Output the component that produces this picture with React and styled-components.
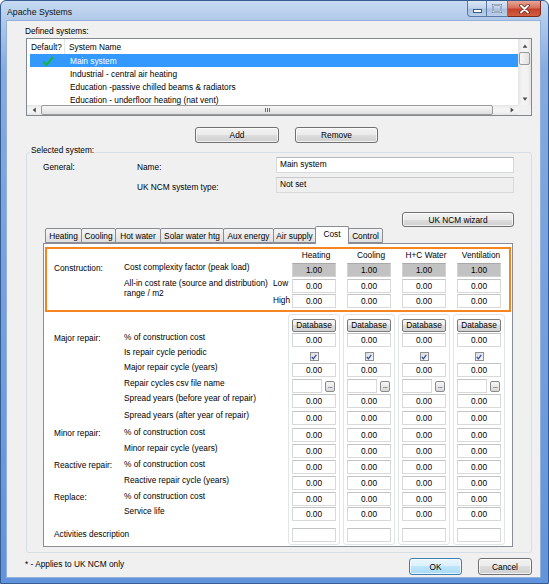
import React from 'react'
import styled, { createGlobalStyle } from 'styled-components'

const FONT = `"Liberation Sans", Arial, sans-serif`

const GlobalStyle = createGlobalStyle`
  html, body { margin: 0; padding: 0; background: #fff; }
  body { font-family: ${FONT}; font-size: 8.3px; color: #000; }
  * { box-sizing: border-box; }
`

const systems = [
  { name: 'Main system', isDefault: true },
  { name: 'Industrial - central air heating' },
  { name: 'Education -passive chilled beams & radiators' },
  { name: 'Education - underfloor heating (nat vent)' },
]

const tabs = [
  { label: 'Heating', w: 37 },
  { label: 'Cooling', w: 35 },
  { label: 'Hot water', w: 46 },
  { label: 'Solar water htg', w: 64 },
  { label: 'Aux energy', w: 51 },
  { label: 'Air supply', w: 43 },
  { label: 'Cost', w: 34, active: true },
  { label: 'Control', w: 35 },
]

const columns = ['Heating', 'Cooling', 'H+C Water', 'Ventilation']

// lower part of the Cost tab: one entry per row, heights follow the screenshot
const costRows = [
  { h: 16, kind: 'db' },
  { h: 15, kind: 'num', section: 'Major repair:', label: '% of construction cost' },
  { h: 15, kind: 'check', label: 'Is repair cycle periodic' },
  { h: 16, kind: 'num', label: 'Major repair cycle (years)' },
  { h: 15, kind: 'file', label: 'Repair cycles csv file name' },
  { h: 17, kind: 'num', label: 'Spread years (before year of repair)' },
  { h: 17, kind: 'num', label: 'Spread years (after year of repair)' },
  { h: 16, kind: 'num', section: 'Minor repair:', label: '% of construction cost' },
  { h: 16, kind: 'num', label: 'Minor repair cycle (years)' },
  { h: 16, kind: 'num', section: 'Reactive repair:', label: '% of construction cost' },
  { h: 16, kind: 'num', label: 'Reactive repair cycle (years)' },
  { h: 15, kind: 'num', section: 'Replace:', label: '% of construction cost' },
  { h: 21, kind: 'num', label: 'Service life' },
  { h: 16, kind: 'empty', wide: 'Activities description' },
]

export default function App() {
  return (
    <>
      <GlobalStyle />
      <Window>
        <TitleBar>
          <TitleText>Apache Systems</TitleText>
          <CaptionButtons>
            <CaptionButton w={20} first>
              <svg width="9" height="8" viewBox="0 0 9 8">
                <rect x="0.5" y="4.5" width="8" height="3" fill="#fff" stroke="#3d5a85" strokeWidth="1" />
              </svg>
            </CaptionButton>
            <CaptionButton w={21}>
              <svg width="10" height="9" viewBox="0 0 10 9">
                <rect x="1" y="1" width="8" height="7" fill="none" stroke="#3d5a85" strokeWidth="2" />
                <rect x="1" y="1" width="8" height="7" fill="none" stroke="#fff" strokeWidth="1" />
              </svg>
            </CaptionButton>
            <CaptionButton w={33} close>
              <svg width="11" height="10" viewBox="0 0 11 10">
                <path d="M2 1.5 L9 8.5 M9 1.5 L2 8.5" stroke="#6b1d12" strokeWidth="3.4" strokeLinecap="round" />
                <path d="M2 1.5 L9 8.5 M9 1.5 L2 8.5" stroke="#fff" strokeWidth="2" strokeLinecap="round" />
              </svg>
            </CaptionButton>
          </CaptionButtons>
        </TitleBar>

        <Client>
          <Caption>Defined systems:</Caption>
          <ListBox>
            <ListBody>
              <ListMain>
                <ListHeader>
                  <HeaderCell w={38} divider>Default?</HeaderCell>
                  <HeaderCell>System Name</HeaderCell>
                </ListHeader>
                {systems.map((s) => (
                  <ListRow key={s.name} selected={s.isDefault}>
                    <DefaultCell>
                      {s.isDefault && (
                        <svg width="12" height="10" viewBox="0 0 12 10">
                          <path d="M1 5.5 L4.5 9 L11 1" fill="none" stroke="#19b43a" strokeWidth="2" />
                        </svg>
                      )}
                    </DefaultCell>
                    <NameCell>{s.name}</NameCell>
                  </ListRow>
                ))}
              </ListMain>
              <VScroll>
                <ScrollArrow><Arrow dir="up" /></ScrollArrow>
                <VThumb />
                <Spacer />
                <ScrollArrow><Arrow dir="down" /></ScrollArrow>
              </VScroll>
            </ListBody>
            <HScroll>
              <ScrollArrow small><Arrow dir="left" /></ScrollArrow>
              <HThumb>
                <Grip>
                  <i /><i /><i />
                </Grip>
              </HThumb>
              <Spacer />
              <ScrollArrow small><Arrow dir="right" /></ScrollArrow>
              <Corner />
            </HScroll>
          </ListBox>

          <ButtonRow>
            <PushButton w={84}>Add</PushButton>
            <PushButton w={83}>Remove</PushButton>
          </ButtonRow>

          <GroupBox>
            <Legend>Selected system:</Legend>
            <FormRow top={2}>
              <FormLabel w={94}>General:</FormLabel>
              <FormLabel w={139}>Name:</FormLabel>
              <TextBox>Main system</TextBox>
            </FormRow>
            <FormRow top={4}>
              <FormLabel w={94} />
              <FormLabel w={139}>UK NCM system type:</FormLabel>
              <TextBox readOnly>Not set</TextBox>
            </FormRow>
            <WizardRow>
              <PushButton w={112} h={15}>UK NCM wizard</PushButton>
            </WizardRow>

            <TabStrip>
              {tabs.map((t, i) => (
                <Tab key={t.label} w={t.w} active={t.active} first={i === 0}>
                  {t.label}
                </Tab>
              ))}
            </TabStrip>
            <TabPanel>
              <Highlight>
                <HeadRow>
                  {columns.map((c) => (
                    <ColHead key={c}>{c}</ColHead>
                  ))}
                </HeadRow>
                <ValueRow h={16} top={3}>
                  <SectionLabel>Construction:</SectionLabel>
                  <ItemLabel w={164}>Cost complexity factor (peak load)</ItemLabel>
                  {columns.map((c) => (
                    <ValueCell key={c}><NumBox grey>1.00</NumBox></ValueCell>
                  ))}
                </ValueRow>
                <ValueRow h={15}>
                  <SectionLabel />
                  <ItemLabel w={149}>
                    All-in cost rate (source and distribution)
                    <br />
                    range / m2
                  </ItemLabel>
                  <SubLabel>Low</SubLabel>
                  {columns.map((c) => (
                    <ValueCell key={c}><NumBox>0.00</NumBox></ValueCell>
                  ))}
                </ValueRow>
                <ValueRow h={15}>
                  <SectionLabel />
                  <ItemLabel w={149} />
                  <SubLabel high>High</SubLabel>
                  {columns.map((c) => (
                    <ValueCell key={c}><NumBox>0.00</NumBox></ValueCell>
                  ))}
                </ValueRow>
              </Highlight>

              <CostArea>
                <LabelColumn>
                  {costRows.map((r, i) => (
                    <LabelRow key={i} h={r.h}>
                      {r.wide ? (
                        <WideLabel>{r.wide}</WideLabel>
                      ) : (
                        <>
                          <SectionLabel>{r.section}</SectionLabel>
                          <ItemLabel w={164}>{r.label}</ItemLabel>
                        </>
                      )}
                    </LabelRow>
                  ))}
                </LabelColumn>
                {columns.map((c) => (
                  <ColumnPanel key={c}>
                    {costRows.map((r, i) => (
                      <PanelCell key={i} h={r.h}>
                        {r.kind === 'db' && <SmallButton>Database</SmallButton>}
                        {r.kind === 'num' && <NumBox>0.00</NumBox>}
                        {r.kind === 'empty' && <NumBox />}
                        {r.kind === 'check' && (
                          <CheckBox>
                            <svg width="6" height="6" viewBox="0 0 6 6">
                              <path d="M0.8 3 L2.4 4.8 L5.3 0.8" fill="none" stroke="#2a4a9e" strokeWidth="1.2" />
                            </svg>
                          </CheckBox>
                        )}
                        {r.kind === 'file' && (
                          <FileCell>
                            <NumBox w={30} />
                            <DotsButton>...</DotsButton>
                          </FileCell>
                        )}
                      </PanelCell>
                    ))}
                  </ColumnPanel>
                ))}
              </CostArea>
            </TabPanel>
          </GroupBox>

          <Footer>
            <Note>* - Applies to UK NCM only</Note>
            <PushButton w={53} h={17} primary>OK</PushButton>
            <PushButton w={54} h={17}>Cancel</PushButton>
          </Footer>
        </Client>
      </Window>
    </>
  )
}

const Arrow = ({ dir }) => {
  const pts = {
    up: '1,5 4,1 7,5',
    down: '1,1 4,5 7,1',
    left: '5,1 1,4 5,7',
    right: '1,1 5,4 1,7',
  }[dir]
  const vertical = dir === 'up' || dir === 'down'
  return (
    <svg width={vertical ? 8 : 6} height={vertical ? 6 : 8} viewBox={vertical ? '0 0 8 6' : '0 0 6 8'}>
      <polygon points={pts} fill="#4d4d4d" transform="scale(0.8) translate(1,1)" />
    </svg>
  )
}

const Window = styled.div`
  width: 549px;
  height: 584px;
  display: flex;
  flex-direction: column;
  border: 1px solid #365b91;
  border-radius: 6px 6px 0 0;
  background: linear-gradient(180deg, #c6daf1 0px, #b1c9ea 19px, #84aae0 70px, #6194dc 100%);
  overflow: hidden;
`

const TitleBar = styled.div`
  height: 19px;
  flex: none;
  display: flex;
  align-items: flex-start;
  padding: 0 7px 0 6px;
`

const TitleText = styled.div`
  padding-top: 6px;
  line-height: 10px;
  font-size: 8.7px;
  color: #111;
`

const CaptionButtons = styled.div`
  margin-left: auto;
  display: flex;
  height: 16px;
`

const CaptionButton = styled.div`
  width: ${(p) => p.w}px;
  height: 100%;
  display: flex;
  align-items: center;
  justify-content: center;
  border: 1px solid ${(p) => (p.close ? '#7c2a1c' : '#5a79a6')};
  border-top: none;
  border-left-width: ${(p) => (p.first ? 1 : 0)}px;
  border-radius: ${(p) => (p.first ? '0 0 0 4px' : p.close ? '0 0 4px 0' : '0')};
  background: ${(p) =>
    p.close
      ? 'linear-gradient(180deg, #e7a797 0%, #d5705b 45%, #c4402a 55%, #d2603f 100%)'
      : 'linear-gradient(180deg, #dbe6f4 0%, #c2d4ec 45%, #a8c0e0 55%, #bad0ea 100%)'};
`

const Client = styled.div`
  flex: 1;
  margin: 0 7px 5px 5px;
  border: 1px solid #93b0d9;
  background: #f0f0f0;
  display: flex;
  flex-direction: column;
`

const Caption = styled.div`
  margin: 5px 0 0 18px;
  line-height: 10px;
`

const ListBox = styled.div`
  margin: 2px 0 0 19px;
  width: 506px;
  height: 78px;
  border: 1px solid #828790;
  background: #fff;
  display: flex;
  flex-direction: column;
`

const ListBody = styled.div`
  flex: 1;
  min-height: 0;
  display: flex;
`

const ListMain = styled.div`
  flex: 1;
  display: flex;
  flex-direction: column;
  overflow: hidden;
`

const ListHeader = styled.div`
  height: 15px;
  flex: none;
  display: flex;
`

const HeaderCell = styled.div`
  width: ${(p) => (p.w ? `${p.w}px` : 'auto')};
  flex: ${(p) => (p.w ? 'none' : 1)};
  padding-left: 4px;
  display: flex;
  align-items: center;
  border-right: ${(p) => (p.divider ? '1px solid #e3e5e8' : 'none')};
`

const ListRow = styled.div`
  height: 13px;
  flex: none;
  display: flex;
  align-items: center;
  margin-left: 3px;
  background: ${(p) => (p.selected ? '#3399ff' : 'transparent')};
  color: ${(p) => (p.selected ? '#fff' : '#000')};
`

const DefaultCell = styled.div`
  width: 35px;
  display: flex;
  justify-content: center;
`

const NameCell = styled.div`
  padding-left: 5px;
  white-space: nowrap;
`

const VScroll = styled.div`
  width: 13px;
  flex: none;
  display: flex;
  flex-direction: column;
  align-items: center;
  background: linear-gradient(90deg, #e4e4e4, #f3f3f3 30%, #f3f3f3 70%, #e4e4e4);
`

const ScrollArrow = styled.div`
  width: 13px;
  height: ${(p) => (p.small ? 10 : 13)}px;
  flex: none;
  display: flex;
  align-items: center;
  justify-content: center;
`

const VThumb = styled.div`
  width: 11px;
  height: 13px;
  flex: none;
  border: 1px solid #9a9a9a;
  border-radius: 2px;
  background: linear-gradient(90deg, #f6f6f6, #e2e2e2);
`

const Spacer = styled.div`
  flex: 1;
`

const HScroll = styled.div`
  height: 10px;
  flex: none;
  display: flex;
  align-items: center;
  background: linear-gradient(180deg, #e4e4e4, #f3f3f3 30%, #f3f3f3 70%, #e4e4e4);
`

const HThumb = styled.div`
  width: 452px;
  height: 10px;
  margin-left: 1px;
  border: 1px solid #9a9a9a;
  border-radius: 2px;
  background: linear-gradient(180deg, #f6f6f6, #e0e0e0);
  display: flex;
  align-items: center;
  justify-content: center;
`

const Grip = styled.div`
  display: flex;
  gap: 1px;
  i {
    width: 1px;
    height: 4px;
    background: #6e6e6e;
  }
`

const Corner = styled.div`
  width: 13px;
  height: 10px;
  background: #f0f0f0;
`

const ButtonRow = styled.div`
  display: flex;
  gap: 16px;
  margin: 11px 0 0 188px;
`

const PushButton = styled.button`
  width: ${(p) => p.w}px;
  height: ${(p) => p.h || 16}px;
  flex: none;
  padding: 0;
  font-family: ${FONT};
  font-size: 8.3px;
  color: #000;
  border: 1px solid ${(p) => (p.primary ? '#3c7fb1' : '#707070')};
  border-radius: 3px;
  background: ${(p) =>
    p.primary
      ? 'linear-gradient(180deg, #eaf6fd 0%, #d9f0fc 50%, #bee6fd 50%, #a7d9f5 100%)'
      : 'linear-gradient(180deg, #f2f2f2 0%, #ebebeb 50%, #dddddd 50%, #cfcfcf 100%)'};
  box-shadow: inset 0 0 0 1px rgba(255, 255, 255, 0.7);
`

const GroupBox = styled.div`
  margin: 9px 0 0 19px;
  width: 506px;
  height: 401px;
  border: 1px solid #d5dfe5;
  border-radius: 3px;
  display: flex;
  flex-direction: column;
`

const Legend = styled.div`
  align-self: flex-start;
  margin: -8px 0 0 3px;
  padding: 0 1px;
  line-height: 10px;
  background: #f0f0f0;
`

const FormRow = styled.div`
  display: flex;
  align-items: center;
  height: 16px;
  margin-top: ${(p) => p.top}px;
  padding-left: 16px;
`

const FormLabel = styled.div`
  width: ${(p) => p.w}px;
  flex: none;
  padding-top: 3px;
`

const TextBox = styled.div`
  width: 238px;
  height: 16px;
  padding: 0 3px 2px;
  display: flex;
  align-items: center;
  border: 1px solid ${(p) => (p.readOnly ? '#dadada' : '#d6d9df')};
  border-top-color: ${(p) => (p.readOnly ? '#c9c9c9' : '#b5b8bf')};
  background: ${(p) => (p.readOnly ? '#efefef' : '#fff')};
`

const WizardRow = styled.div`
  display: flex;
  justify-content: flex-end;
  margin-top: 19px;
  padding-right: 17px;
`

const TabStrip = styled.div`
  display: flex;
  align-items: flex-end;
  height: 17px;
  margin-top: -1px;
  padding-left: 18px;
`

const Tab = styled.div`
  position: relative;
  z-index: ${(p) => (p.active ? 1 : 0)};
  width: ${(p) => p.w}px;
  height: ${(p) => (p.active ? 18 : 15)}px;
  margin-bottom: ${(p) => (p.active ? -1 : 0)}px;
  margin-left: ${(p) => (p.first ? 0 : -1)}px;
  display: flex;
  align-items: center;
  justify-content: center;
  padding-bottom: ${(p) => (p.active ? 4 : 0)}px;
  border: 1px solid #898c95;
  border-bottom: ${(p) => (p.active ? 'none' : '1px solid #898c95')};
  border-radius: 2px 2px 0 0;
  background: ${(p) => (p.active ? '#fff' : 'linear-gradient(180deg, #f4f4f4 0%, #ebebeb 50%, #dedede 100%)')};
  white-space: nowrap;
`

const TabPanel = styled.div`
  margin-left: 16px;
  width: 470px;
  height: 304px;
  border: 1px solid #898c95;
  background: #fff;
  display: flex;
  flex-direction: column;
`

const Highlight = styled.div`
  margin: 3px 1px 0 1px;
  height: 65px;
  flex: none;
  border: 2px solid #f6841f;
  padding-left: 7px;
  display: flex;
  flex-direction: column;
`

const HeadRow = styled.div`
  display: flex;
  height: 10px;
  margin-top: 1px;
  padding-left: 234px;
  line-height: 10px;
`

const ColHead = styled.div`
  width: 52px;
  margin-right: 3px;
  padding-left: 4px;
  text-align: center;
  white-space: nowrap;
`

const ValueRow = styled.div`
  display: flex;
  align-items: flex-start;
  height: ${(p) => p.h}px;
  margin-top: ${(p) => p.top || 0}px;
  line-height: 10px;
`

const SectionLabel = styled.div`
  width: 70px;
  flex: none;
  white-space: nowrap;
`

const ItemLabel = styled.div`
  width: ${(p) => p.w}px;
  flex: none;
  white-space: nowrap;
  margin-top: -1px;
`

const SubLabel = styled.div`
  width: 15px;
  flex: none;
  margin-top: ${(p) => (p.high ? 1 : -1)}px;
`

const ValueCell = styled.div`
  width: 55px;
  flex: none;
  padding-left: 4px;
`

const NumBox = styled.div`
  width: ${(p) => p.w || 44}px;
  height: 14px;
  flex: none;
  border: 1px solid ${(p) => (p.grey ? '#d2d2d2' : '#d9d9d9')};
  border-top-color: ${(p) => (p.grey ? '#a9a9a9' : '#c4c4c4')};
  background: ${(p) => (p.grey ? '#c2c2c2' : '#fff')};
  text-align: center;
  line-height: 12px;
`

const CostArea = styled.div`
  display: flex;
  padding: 2px 0 0 10px;
`

const LabelColumn = styled.div`
  width: 234px;
  flex: none;
  padding-top: 3px;
`

const LabelRow = styled.div`
  display: flex;
  height: ${(p) => p.h}px;
  line-height: 10px;
`

const WideLabel = styled.div`
  white-space: nowrap;
  padding-top: 1px;
`

const ColumnPanel = styled.div`
  width: 52px;
  height: 231px;
  flex: none;
  margin-right: 3px;
  border: 1px solid #e1e4e8;
  border-radius: 3px;
  padding: 2px 0 0 3px;
`

const PanelCell = styled.div`
  height: ${(p) => p.h}px;
  width: 44px;
  display: flex;
  flex-direction: column;
  align-items: center;
`

const SmallButton = styled.div`
  width: 44px;
  height: 13px;
  margin-top: 2px;
  border: 1px solid #7d7d7d;
  border-radius: 2px;
  background: linear-gradient(180deg, #f6f6f6 0%, #ececec 50%, #dcdcdc 50%, #d2d2d2 100%);
  text-align: center;
  line-height: 11px;
`

const CheckBox = styled.div`
  width: 9px;
  height: 9px;
  margin-top: 4px;
  border: 1px solid #8f8f8f;
  background: linear-gradient(135deg, #dadde3, #f7f7f7);
  display: flex;
  align-items: center;
  justify-content: center;
`

const FileCell = styled.div`
  display: flex;
  width: 44px;
  gap: 3px;
  align-items: flex-start;
`

const DotsButton = styled.div`
  width: 10px;
  height: 11px;
  margin-top: 2px;
  border: 1px solid #8a8a8a;
  border-radius: 2px;
  background: linear-gradient(180deg, #f7f7f7, #d8d8d8);
  font-size: 7px;
  line-height: 7px;
  text-align: center;
  letter-spacing: -0.5px;
`

const Footer = styled.div`
  display: flex;
  align-items: flex-start;
  height: 17px;
  margin-top: 5px;
  padding: 0 8px 0 18px;
  gap: 16px;
`

const Note = styled.div`
  padding-top: 1px;
  line-height: 10px;
  margin-right: auto;
`
